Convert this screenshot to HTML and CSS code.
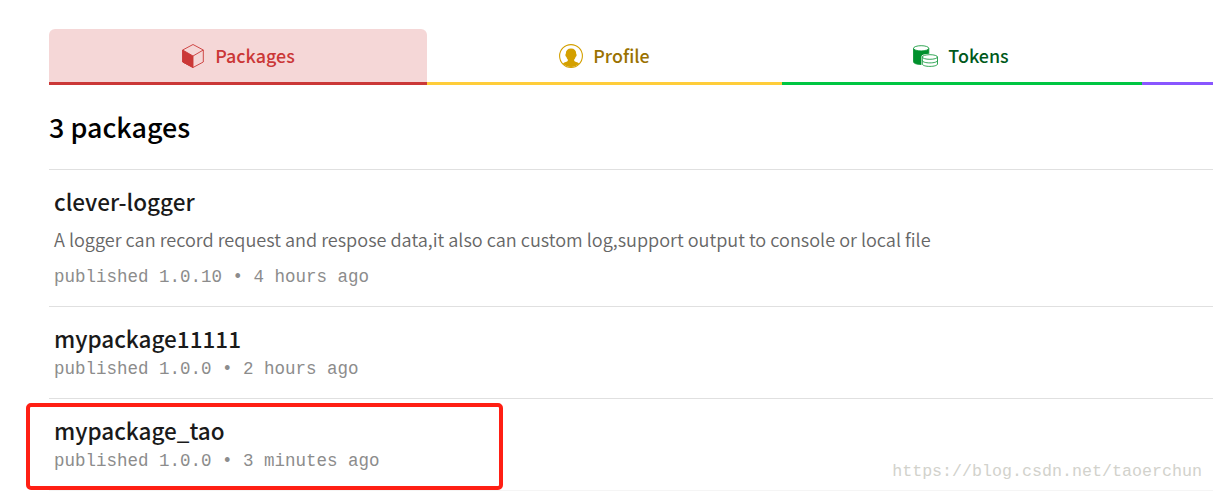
FILE: index.html
```html
<!DOCTYPE html>
<html lang="en">
<head>
    <meta charset="UTF-8">
    <meta name="viewport" content="width=device-width, initial-scale=1.0">
    <title>Packages</title>
    <link rel="stylesheet" href="styles.css">
</head>
<body>

<div class="page">
    <nav class="tabs">
        <a class="tab tab-packages active">
            <svg class="icon" width="24" height="26" viewBox="0 0 24 26" fill="none" stroke="currentColor" stroke-width="0.9" stroke-linejoin="round">
                <path d="M12 1.5 22.3 7v12L12 24.5 1.7 19V7z"/>
                <path d="M22.3 7 12 13"/>
                <path d="M1.7 7 12 13v11.5L1.7 19z" fill="currentColor"/>
            </svg>
            <span>Packages</span>
        </a>
        <a class="tab tab-profile">
            <svg class="icon" width="24" height="24" viewBox="0 0 24 24">
                <circle cx="12" cy="12" r="11.400" fill="none" stroke="currentColor" stroke-width="1.1"/>
                <path fill="currentColor" d="M12 4.500c3.400 0 5.200 2 5.200 5.200 0 .5.6.6.4 1.700-.2.9-.8 1-1 1.600-.3 1.100-.8 1.800-1.400 2.500v1.300c.4 1 3.300 1.200 4.900 2.700C18.200 21.800 15.300 23 12 23s-6.200-1.200-8.100-3.500c1.600-1.500 4.500-1.700 4.900-2.700v-1.300c-.6-.7-1.100-1.400-1.400-2.500-.2-.6-.8-.7-1-1.600-.2-1.100.4-1.200.4-1.700 0-3.200 1.800-5.200 5.200-5.200z"/>
            </svg>
            <span>Profile</span>
        </a>
        <a class="tab tab-tokens">
            <svg class="icon" width="25" height="22" viewBox="0 0 25 22" stroke="currentColor" stroke-width="0.8">
                <path fill="currentColor" d="M.5 3.500v13.300c0 1.600 3.400 2.700 7.700 2.700s7.600-1.100 7.600-2.700V3.500z"/>
                <ellipse cx="8.150" cy="3.300" rx="7.650" ry="2.600" fill="#fff"/>
                <path fill="#fff" stroke="#fff" stroke-width="2" d="M9.300 12v7c0 1.400 3.400 2.400 7.600 2.400s7.600-1 7.600-2.400v-7c0-1.400-3.400-2.300-7.600-2.300S9.300 10.600 9.300 12z"/>
                <path fill="#fff" d="M9.300 12v7c0 1.400 3.400 2.400 7.600 2.400s7.600-1 7.600-2.400v-7z"/>
                <ellipse cx="16.900" cy="12" rx="7.600" ry="2.300" fill="#fff"/>
                <path fill="none" d="M9.300 15.500c0 1.400 3.400 2.400 7.600 2.400s7.600-1 7.600-2.400"/>
            </svg>
            <span>Tokens</span>
        </a>
        <a class="tab tab-more"></a>
    </nav>

    <h1>3 packages</h1>

    <ul class="package-list">
        <li class="package">
            <h3>clever-logger</h3>
            <p class="description">A logger can record request and respose data,it also can custom log,support output to console or local file</p>
            <p class="published">published 1.0.10 • 4 hours ago</p>
        </li>
        <li class="package">
            <h3>mypackage11111</h3>
            <p class="published">published 1.0.0 • 2 hours ago</p>
        </li>
        <li class="package">
            <h3>mypackage_tao</h3>
            <p class="published">published 1.0.0 • 3 minutes ago</p>
            <div class="highlight"></div>
        </li>
    </ul>
</div>

<div class="watermark">https://blog.csdn.net/taoerchun</div>

</body>
</html>
```
FILE: styles.css
```css
* {
    box-sizing: border-box;
}

body {
    font-family: "Noto Sans CJK SC", "Open Sans", sans-serif;
    background-color: #fff;
    margin: 0;
    height: 491px;
    overflow: hidden;
    position: relative;
}

.page {
    padding: 29px 0 0 49px;
}

.tabs {
    display: grid;
    grid-template-columns: 378px 355px 360px 1fr;
    height: 56px;
}

.tab {
    display: flex;
    align-items: center;
    justify-content: center;
    gap: 10px;
    border-bottom: 3px solid;
    font-size: 17.9px;
    font-weight: 500;
    line-height: 26px;
}

.tab span {
    padding-bottom: 2px;
}

.tab-packages {
    color: #cb3837;
    border-color: #cb3837;
}

.tab-packages.active {
    background-color: #f5d7d7;
    border-radius: 6px 6px 0 0;
}

.tab-profile {
    color: #9a7200;
    border-color: #ffcd3a;
}

.tab-profile .icon {
    color: #d4a000;
}

.tab-tokens {
    color: #00591b;
    border-color: #00c642;
    padding-right: 2px;
}

.tab-tokens .icon {
    color: #00902c;
}

.tab-more {
    border-color: #8956ff;
}

h1 {
    font-size: 26.9px;
    font-weight: 500;
    line-height: 36px;
    margin: 24px 0;
    color: #000;
}

.package-list {
    list-style: none;
    margin: 0;
    padding: 0;
    border-bottom: 1px solid #f5f5f5;
}

.package {
    position: relative;
    height: 92px;
    padding: 15px 5px 0;
    border-top: 1px solid #e0e0e0;
}

.package:first-child {
    height: 137px;
}

.package h3 {
    font-size: 22.5px;
    font-weight: 500;
    line-height: 32px;
    margin: 0 0 2px;
    color: #1a1a1a;
}

.description {
    font-size: 18.1px;
    font-weight: 350;
    line-height: 26px;
    margin: 9px 0 12px;
    color: #666;
}

.published {
    font-family: "Liberation Mono", monospace;
    font-size: 17.5px;
    line-height: 26px;
    margin: 0;
    color: #8c8c8c;
}

.highlight {
    position: absolute;
    left: -23px;
    top: 4px;
    width: 477px;
    height: 87px;
    border: 4px solid #ff1f14;
    border-radius: 5px;
}

.watermark {
    position: absolute;
    right: 11px;
    bottom: 8px;
    font-family: "Liberation Mono", monospace;
    font-size: 16.67px;
    line-height: 22px;
    color: #d2d2cc;
}
```
